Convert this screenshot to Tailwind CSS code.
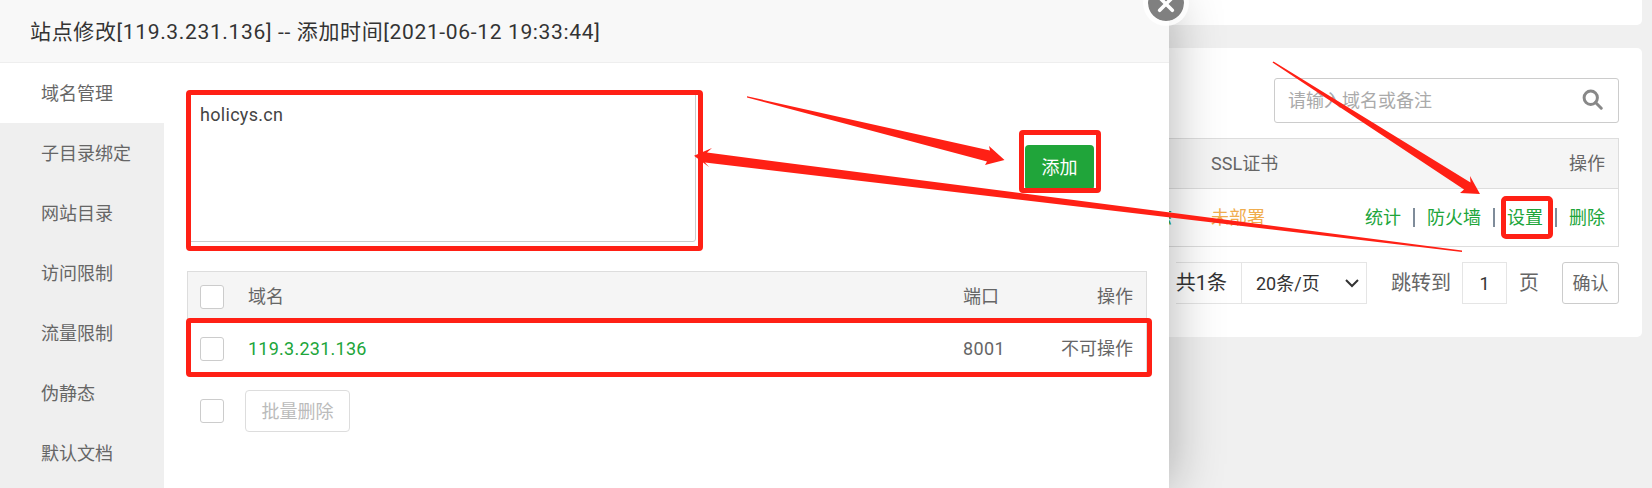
<!DOCTYPE html>
<html lang="en">
<head>
  <meta charset="UTF-8" />
  <title>站点修改</title>
  <script src="https://cdn.jsdelivr.net/npm/@tailwindcss/browser@4"></script>
</head>
<body class="relative w-[1652px] h-[488px] overflow-hidden bg-[#f0f0f0] text-[18px] text-[#666] font-['Roboto','Noto_Sans_CJK_SC',sans-serif]">

  <!-- page behind the layer -->
  <div class="flex flex-col gap-[23px] w-[1642px] h-full">
    <div class="h-[25px] shrink-0 bg-white rounded-b-[5px]"></div>
    <div class="h-[289px] shrink-0 bg-white rounded-[5px] pt-[30px] pr-[23px] flex flex-col items-end">
      <div class="flex items-center justify-between w-[345px] h-[45px] border border-[#ccc] rounded-[3px] pl-[13px] pr-[15px] text-[#aaa]">
        <span>请输入域名或备注</span>
        <svg class="w-[21px] h-[21px] -mt-[2px]" viewBox="0 0 24 24" fill="none" stroke="#888" stroke-width="3.4"><circle cx="10" cy="10" r="7.6"/><path d="M15.5 15.500L22 22" stroke-linecap="round"/></svg>
      </div>
      <div class="mt-[15px] w-[1000px] border border-[#ddd]">
        <div class="flex items-center h-[50px] bg-[#f5f5f5] border-b border-[#ddd] pl-[504px] pr-[13px]">
          <span class="text-[#3c5a78]">PHP?</span><span class="ml-[43px]">SSL证书</span><span class="ml-auto">操作</span>
        </div>
        <div class="flex items-center h-[57px] pl-[516px] pr-[13px]">
          <span class="text-[#20a53a]">静态</span>
          <span class="ml-[39px] text-[#f0ad4e]">未部署</span>
          <div class="flex items-center ml-auto text-[#20a53a]">
            <span>统计</span><span class="mx-[12px] w-[2px] h-[19px] bg-[#7f8c9a]"></span><span>防火墙</span><span class="mx-[12px] w-[2px] h-[19px] bg-[#7f8c9a]"></span><span>设置</span><span class="mx-[12px] w-[2px] h-[19px] bg-[#7f8c9a]"></span><span>删除</span>
          </div>
        </div>
      </div>
      <div class="flex items-center mt-[15px] h-[42px] text-[#333]">
        <div class="flex items-center h-full border-y border-[#e5e5e5] pr-[14px] text-[20px]">共1条</div>
        <div class="flex items-center justify-between w-[126px] h-full border border-[#e5e5e5] pl-[14px] pr-[7px]">
          <span>20条/页</span>
          <svg class="w-[14px] h-[10px]" viewBox="0 0 14 10" fill="none" stroke="#333" stroke-width="2"><path d="M1 2l6 6 6-6"/></svg>
        </div>
        <span class="ml-[24px] text-[20px] text-[#666]">跳转到</span>
        <div class="flex items-center justify-center ml-[11px] w-[45px] h-full border border-[#e5e5e5]">1</div>
        <span class="ml-[12px] text-[20px] text-[#666]">页</span>
        <div class="flex items-center justify-center ml-[23px] w-[57px] h-full border border-[#ccc] rounded-[3px] text-[#666]">确认</div>
      </div>
    </div>
  </div>

  <!-- layer -->
  <div class="absolute left-0 top-0 flex flex-col w-[1169px] h-full bg-white shadow-[1px_1px_50px_rgba(0,0,0,0.3)]">
    <div class="flex items-center h-[63px] shrink-0 bg-[#f8f8f8] border-b border-[#eee] pl-[30px] pt-[3px] text-[21px] tracking-[0.65px] text-[#333]">站点修改[119.3.231.136] -- 添加时间[2021-06-12 19:33:44]</div>
    <div class="flex flex-1 min-h-0">
      <div class="w-[164px] shrink-0 bg-[#efefef] flex flex-col">
        <div class="flex items-center h-[60px] shrink-0 pl-[41px] bg-white">域名管理</div>
        <div class="flex items-center h-[60px] shrink-0 pl-[41px]">子目录绑定</div>
        <div class="flex items-center h-[60px] shrink-0 pl-[41px]">网站目录</div>
        <div class="flex items-center h-[60px] shrink-0 pl-[41px]">访问限制</div>
        <div class="flex items-center h-[60px] shrink-0 pl-[41px]">流量限制</div>
        <div class="flex items-center h-[60px] shrink-0 pl-[41px]">伪静态</div>
        <div class="flex items-center h-[60px] shrink-0 pl-[41px]">默认文档</div>
      </div>
      <div class="flex-1 pl-[23px] pr-[22px] pt-[29px]">
        <div class="flex items-center">
          <div class="w-[509px] h-[150px] border border-[#ccc] rounded-[3px] pl-[12px] pt-[9px] text-[#444] leading-[26px] tracking-[0.3px]">holicys.cn</div>
          <div class="flex items-center justify-center ml-[329px] w-[69px] h-[45px] bg-[#20a53a] rounded-[4px] text-white">添加</div>
        </div>
        <div class="mt-[29px] border border-[#ddd]">
          <div class="flex items-center h-[50px] bg-[#f5f5f5] border-b border-[#ddd] pl-[12px] pr-[13px]">
            <span class="w-[24px] h-[24px] bg-white border border-[#ccc] rounded-[3px]"></span>
            <span class="ml-[24px] w-[715px]">域名</span>
            <span class="w-[60px]">端口</span>
            <span class="flex-1 text-right">操作</span>
          </div>
          <div class="flex items-center h-[53px] pl-[12px] pr-[13px]">
            <span class="w-[24px] h-[24px] bg-white border border-[#ccc] rounded-[3px]"></span>
            <span class="ml-[24px] w-[715px] text-[#20a53a] tracking-[0.25px]">119.3.231.136</span>
            <span class="w-[60px] tracking-[0.4px]">8001</span>
            <span class="flex-1 text-right">不可操作</span>
          </div>
        </div>
        <div class="flex items-center mt-[14px] pl-[13px]">
          <span class="w-[24px] h-[24px] border border-[#ccc] rounded-[3px]"></span>
          <span class="flex items-center justify-center ml-[21px] w-[105px] h-[42px] border border-[#ddd] rounded-[4px] text-[#bbb]">批量删除</span>
        </div>
      </div>
    </div>
  </div>

  <!-- close button of the layer -->
  <div class="absolute left-[1143px] top-[-20px] flex items-center justify-center w-[46px] h-[46px] rounded-full bg-[#808080] border-[5px] border-white/80 bg-clip-padding">
    <svg class="w-[18px] h-[18px] mt-[2px]" viewBox="0 0 20 20" stroke="#fff" stroke-width="4" stroke-linecap="round"><path d="M3 3l14 14M17 3L3 17"/></svg>
  </div>

  <!-- red annotations -->
  <div class="absolute left-[186px] top-[90px] w-[517px] h-[161px] border-[5px] border-[#ff2015] rounded-[4px]"></div>
  <div class="absolute left-[1019px] top-[130px] w-[82px] h-[63px] border-[5px] border-[#ff2015] rounded-[4px]"></div>
  <div class="absolute left-[186px] top-[318px] w-[966px] h-[59px] border-[5px] border-[#ff2015] rounded-[4px]"></div>
  <div class="absolute left-[1501px] top-[196px] w-[52px] h-[43px] border-[5px] border-[#ff2015] rounded-[5px]"></div>
  <svg class="absolute left-0 top-0 w-[1652px] h-[488px]" viewBox="0 0 1652 488" fill="#ff2015">
    <path d="M747 96.300L990 150.500L989 146L1004.500 160L985 165L987 161.500L747 97.500Z"/>
    <path d="M1462 250.500L1462 252L705 162.500L709 167L694 155.700L712 148L707 152.500Z"/>
    <path d="M1273.500 61.500L1470.500 182.500L1470 176L1480 194L1460 193L1464 189.500L1272.500 62.500Z"/>
  </svg>
</body>
</html>
